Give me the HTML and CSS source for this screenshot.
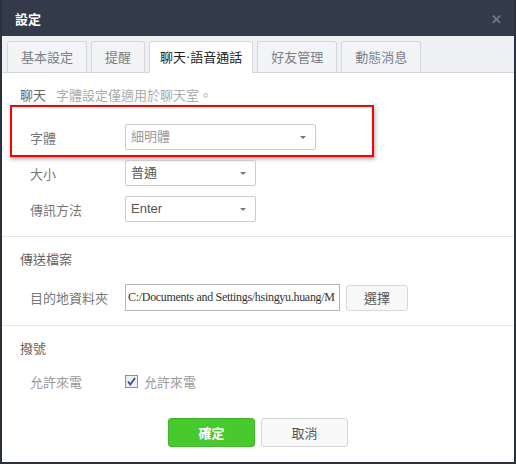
FILE: index.html
```html
<!DOCTYPE html>
<html>
<head>
	<title>設定</title>
	<link rel="stylesheet" href="styles.css">
</head>
<body>
	<div class="window">
		<!-- Title Bar -->
		<div class="titlebar">
			<span class="title">設定</span>
			<span class="close">✕</span>
		</div>

		<!-- Tabs -->
		<ul class="tabs">
			<li>基本設定</li>
			<li>提醒</li>
			<li class="active">聊天<span class="dot">‧</span>語音通話</li>
			<li>好友管理</li>
			<li>動態消息</li>
		</ul>

		<!-- Chat Section -->
		<section class="group">
			<h2>聊天<span class="note">字體設定僅適用於聊天室。</span></h2>
			<div class="highlight">
				<div class="row">
					<label>字體</label>
					<div class="select wide faint">細明體<span class="caret"></span></div>
				</div>
			</div>
			<div class="row first">
				<label>大小</label>
				<div class="select">普通<span class="caret"></span></div>
			</div>
			<div class="row">
				<label>傳訊方法</label>
				<div class="select">Enter<span class="caret"></span></div>
			</div>
		</section>

		<!-- File Transfer Section -->
		<section class="group">
			<h2>傳送檔案</h2>
			<div class="row">
				<label>目的地資料夾</label>
				<div class="path">C:/Documents and Settings/hsingyu.huang/M</div>
				<button class="btn-pick">選擇</button>
			</div>
		</section>

		<!-- Call Section -->
		<section class="group last">
			<h2>撥號</h2>
			<div class="row">
				<label class="light">允許來電</label>
				<span class="check">
					<svg width="13" height="13" viewBox="0 0 13 13">
						<rect x="0.5" y="0.5" width="12" height="12" fill="#eef0f4" stroke="#8a8f98"/>
						<path d="M3 6.5 L5.3 9.5 L10 3" fill="none" stroke="#2f4f9a" stroke-width="1.8"/>
					</svg>
				</span>
				<span class="light">允許來電</span>
			</div>
			<div class="actions">
				<button class="btn-ok">確定</button>
				<button class="btn-cancel">取消</button>
			</div>
		</section>
	</div>
</body>
</html>
```

FILE: styles.css
```css
body {
	margin: 0;
	font-family: "Noto Sans CJK TC", "Liberation Sans", sans-serif;
	font-size: 13px;
	color: #666;
}

.window {
	width: 512px;
	height: 462px;
	border: 2px solid #2c323d;
	border-top: none;
	background: #fff;
	display: flex;
	flex-direction: column;
}

.titlebar {
	height: 36px;
	background: #333b4a;
	display: flex;
	align-items: center;
	justify-content: space-between;
	padding: 0 12px 0 13px;
}

.title {
	color: #fff;
	font-weight: bold;
	font-size: 13px;
}

.close {
	color: #6f7888;
	font-size: 13px;
	font-weight: bold;
}

.tabs {
	list-style: none;
	margin: 0;
	padding: 5px 0 0 5px;
	display: flex;
	gap: 4px;
	background: #eef0f3;
	border-bottom: 1px solid #d3d6db;
}

.tabs li {
	height: 30px;
	line-height: 30px;
	padding: 0 13px;
	border: 1px solid #d3d6db;
	border-bottom: none;
	border-radius: 3px 3px 0 0;
	background: #f3f4f6;
	color: #7a7e86;
}

.tabs li.active {
	background: #fff;
	color: #222;
	margin-bottom: -1px;
	height: 31px;
	padding: 0 10px;
}

.tabs .dot {
	font-family: "DejaVu Sans", sans-serif;
}

.group {
	padding: 13px 0 14px 8px;
	border-bottom: 1px solid #e6e6e6;
}

.group:first-of-type {
	padding-bottom: 14px;
}

.group.last {
	border-bottom: none;
	padding-bottom: 0;
}

h2 {
	margin: 0 0 0 10px;
	font-size: 13px;
	font-weight: normal;
	line-height: 18px;
	color: #666;
}

.note {
	color: #aaa;
	margin-left: 10px;
}

.highlight {
	width: 342px;
	margin-top: 1px;
	border: 2px solid #f00;
	box-shadow: 1px 2px 4px rgba(0, 0, 0, 0.35);
	padding: 17px 0 5px 18px;
}

.row {
	display: flex;
	align-items: center;
	padding-left: 20px;
	margin-top: 10px;
}

.highlight .row {
	margin-top: 0;
	padding-left: 0;
}

.row.first {
	margin-top: 3px;
}

.row label {
	width: 95px;
	color: #777;
}

.light {
	color: #9a9a9a !important;
}

.select {
	position: relative;
	width: 124px;
	height: 24px;
	line-height: 24px;
	padding-left: 5px;
	border: 1px solid #ccc;
	border-radius: 2px;
	color: #555;
	font-family: "Liberation Sans", "Noto Sans CJK TC", sans-serif;
}

.select.wide {
	width: 184px;
}

.select.faint {
	color: #999;
}

.caret {
	position: absolute;
	right: 9px;
	top: 11px;
	border-left: 3px solid transparent;
	border-right: 3px solid transparent;
	border-top: 3px solid #777;
}

.group:nth-of-type(2) .row {
	margin-top: 16px;
}

.path {
	width: 211px;
	height: 25px;
	line-height: 25px;
	padding-left: 2px;
	border: 1px solid #b5b5b5;
	overflow: hidden;
	white-space: nowrap;
	font-family: "Liberation Serif", serif;
	font-size: 12px;
	letter-spacing: -0.3px;
	color: #333;
}

.btn-pick {
	margin-left: 6px;
	width: 62px;
	height: 26px;
	background: #f8f8f8;
	border: 1px solid #d8d8d8;
	border-radius: 3px;
	font-family: inherit;
	font-size: 13px;
	color: #555;
}

.group.last .row {
	margin-top: 14px;
	height: 20px;
}

.check {
	display: flex;
	margin-right: 6px;
}

.actions {
	display: flex;
	justify-content: center;
	gap: 6px;
	margin-top: 27px;
	padding-right: 8px;
}

.actions button {
	width: 87px;
	height: 29px;
	border-radius: 3px;
	font-family: inherit;
	font-size: 13px;
}

.btn-ok {
	background: #48c92e;
	border: 1px solid #3fb628;
	color: #fff;
	font-weight: bold;
}

.btn-cancel {
	background: #f9f9f9;
	border: 1px solid #d6d6d6;
	color: #555;
}
```
